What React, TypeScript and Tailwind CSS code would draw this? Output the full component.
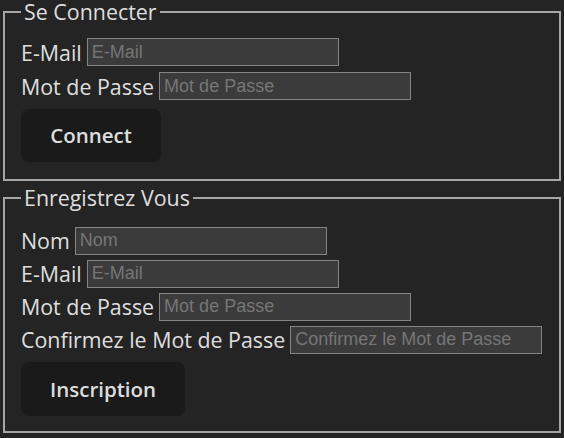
import React from "react";

type Field = { label: string };

const Row: React.FC<{ label: string; h: string }> = ({ label, h }) => (
  <div className={`flex items-center ${h}`}>
    <label className="whitespace-nowrap">{label}</label>
    <input
      type="text"
      placeholder={label}
      className="ml-[5px] w-[252px] h-[28px] bg-[#3b3b3b] border border-[#858585] px-[4px] text-[18px] font-['Liberation_Sans',Arial,sans-serif] text-white placeholder:text-[#767676] outline-none"
    />
  </div>
);

const login: Field[] = [{ label: "E-Mail" }, { label: "Mot de Passe" }];
const register: Field[] = [
  { label: "Nom" },
  { label: "E-Mail" },
  { label: "Mot de Passe" },
  { label: "Confirmez le Mot de Passe" },
];

const App: React.FC = () => {
  return (
    <div className="w-[564px] h-[438px] bg-[#242424] text-[rgba(255,255,255,0.87)] font-['Open_Sans',sans-serif] text-[21.4px] leading-[23px]">
      <fieldset className="mx-[3px] border-2 border-[#a6a6a6] pl-[16px] pr-[16px] pb-[17px]">
        <legend className="px-[3px] leading-[23px]">Se Connecter</legend>
        <div className="pt-[12px]">
          {login.map((f) => (
            <Row key={f.label} label={f.label} h="h-[34px]" />
          ))}
        </div>
        <button className="mt-[6px] w-[140px] h-[53px] rounded-[8px] bg-[#1a1a1a] font-semibold text-[20.5px]">
          Connect
        </button>
      </fieldset>

      <fieldset className="mt-[5px] mx-[3px] border-2 border-[#a6a6a6] pl-[16px] pr-[16px] pb-[15px]">
        <legend className="px-[3px] leading-[23px]">Enregistrez Vous</legend>
        <div className="pt-[15px]">
          {register.map((f) => (
            <Row key={f.label} label={f.label} h="h-[33px]" />
          ))}
        </div>
        <button className="mt-[6px] w-[164px] h-[54px] rounded-[8px] bg-[#1a1a1a] font-semibold text-[20.5px]">
          Inscription
        </button>
      </fieldset>
    </div>
  );
};

export default App;
